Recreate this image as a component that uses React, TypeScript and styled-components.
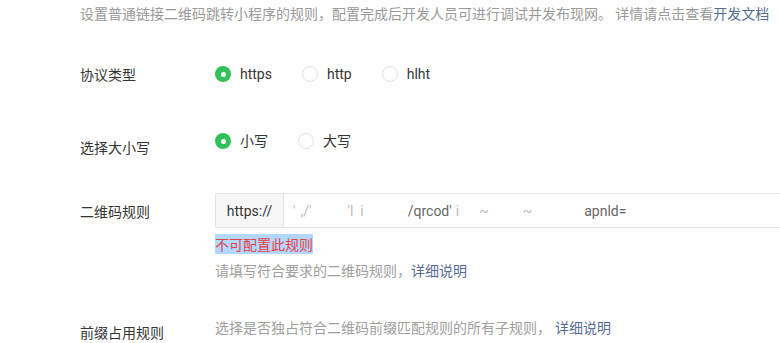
import React from "react";
import styled, { createGlobalStyle } from "styled-components";

const Global = createGlobalStyle`
  html, body { margin: 0; padding: 0; background: #fff; overflow: hidden; }
  body {
    font-family: Roboto, "Noto Sans CJK SC", sans-serif;
    -webkit-font-smoothing: antialiased;
  }
`;

const Page = styled.div`
  width: 780px;
  height: 343px;
  overflow: hidden;
  padding-left: 80px;
  box-sizing: border-box;
`;

const Desc = styled.div`
  font-family: "Noto Sans CJK SC", sans-serif;
  font-size: 14px;
  line-height: 20px;
  color: #9a9a9a;
  white-space: nowrap;
  padding-top: 3px;
`;

const Link = styled.a<{ $gap?: number }>`
  color: #576b95;
  text-decoration: none;
  margin-left: ${(p) => p.$gap ?? 0}px;
`;

const Row = styled.div<{ $top: number }>`
  display: grid;
  grid-template-columns: 135px 1fr;
  margin-top: ${(p) => p.$top}px;
`;

const Label = styled.div<{ $pad?: number }>`
  font-family: "Noto Sans CJK SC", sans-serif;
  font-size: 14px;
  line-height: 22px;
  color: #353535;
  padding-top: ${(p) => p.$pad ?? 0}px;
  white-space: nowrap;
`;

const RadioGroup = styled.div`
  display: flex;
  align-items: center;
  gap: 30px;
  height: 22px;
`;

const RadioItem = styled.label`
  display: flex;
  align-items: center;
  gap: 9px;
  font-family: Roboto, "Noto Sans CJK SC", sans-serif;
  font-size: 14px;
  color: #353535;
  line-height: 22px;
`;

const Circle = styled.span<{ $on?: boolean }>`
  width: 16px;
  height: 16px;
  border-radius: 50%;
  box-sizing: border-box;
  background: ${(p) => (p.$on ? "#32c15a" : "#fff")};
  border: ${(p) => (p.$on ? "none" : "1px solid #e2e2e2")};
  display: flex;
  align-items: center;
  justify-content: center;
  &::after {
    content: "";
    display: ${(p) => (p.$on ? "block" : "none")};
    width: 5px;
    height: 5px;
    border-radius: 50%;
    background: #fff;
  }
`;

const Field = styled.div`
  display: flex;
  flex-direction: column;
  align-items: flex-start;
`;

const InputBox = styled.div`
  display: flex;
  width: 620px;
  height: 35px;
  box-sizing: border-box;
  border: 1px solid #e4e4e4;
  border-radius: 2px;
`;

const Prefix = styled.div`
  width: 68px;
  flex: none;
  box-sizing: border-box;
  background: #f7f7f7;
  border-right: 1px solid #e4e4e4;
  font-size: 14px;
  color: #353535;
  display: flex;
  align-items: center;
  justify-content: center;
  font-family: Roboto, sans-serif;
`;

const Value = styled.div`
  flex: 1;
  display: flex;
  align-items: center;
  font-size: 14px;
  white-space: nowrap;
  font-family: Roboto, sans-serif;
`;

const Frag = styled.span<{ $x: number; $faint?: boolean }>`
  margin-left: ${(p) => p.$x}px;
  color: ${(p) => (p.$faint ? "#bdbdbd" : "#666")};
`;

const ErrorText = styled.div`
  margin-top: 6px;
  font-family: "Noto Sans CJK SC", sans-serif;
  font-size: 14px;
  line-height: 20px;
  color: #e64340;
  background: #b3d7fe;
`;

const Hint = styled.div<{ $top?: number }>`
  margin-top: ${(p) => p.$top ?? 0}px;
  font-family: "Noto Sans CJK SC", sans-serif;
  font-size: 14px;
  line-height: 22px;
  color: #a0a0a0;
  white-space: nowrap;
`;

export default function App() {
  return (
    <>
      <Global />
      <Page>
        <Desc>
          设置普通链接二维码跳转小程序的规则，配置完成后开发人员可进行调试并发布现网。 详情请点击查看<Link>开发文档</Link>
        </Desc>

        <Row $top={40}>
          <Label>协议类型</Label>
          <RadioGroup>
            <RadioItem>
              <Circle $on />
              https
            </RadioItem>
            <RadioItem>
              <Circle />
              http
            </RadioItem>
            <RadioItem>
              <Circle />
              hlht
            </RadioItem>
          </RadioGroup>
        </Row>

        <Row $top={45}>
          <Label $pad={6}>选择大小写</Label>
          <RadioGroup>
            <RadioItem>
              <Circle $on />
              小写
            </RadioItem>
            <RadioItem>
              <Circle />
              大写
            </RadioItem>
          </RadioGroup>
        </Row>

        <Row $top={35}>
          <Label $pad={7}>二维码规则</Label>
          <Field>
            <InputBox>
              <Prefix>https://</Prefix>
              <Value>
                <Frag $x={9} $faint>'</Frag>
                <Frag $x={5} $faint>,/'</Frag>
                <Frag $x={36} $faint>'l</Frag>
                <Frag $x={7} $faint>i</Frag>
                <Frag $x={44}>/qrcod'</Frag>
                <Frag $x={4} $faint>i</Frag>
                <Frag $x={20} $faint>~</Frag>
                <Frag $x={34} $faint>~</Frag>
                <Frag $x={52}>apnld=</Frag>
              </Value>
            </InputBox>
            <ErrorText>不可配置此规则</ErrorText>
            <Hint $top={5}>
              请填写符合要求的二维码规则，<Link>详细说明</Link>
            </Hint>
          </Field>
        </Row>

        <Row $top={35}>
          <Label $pad={5}>前缀占用规则</Label>
          <Hint>
            选择是否独占符合二维码前缀匹配规则的所有子规则，<Link $gap={4}>详细说明</Link>
          </Hint>
        </Row>
      </Page>
    </>
  );
}
